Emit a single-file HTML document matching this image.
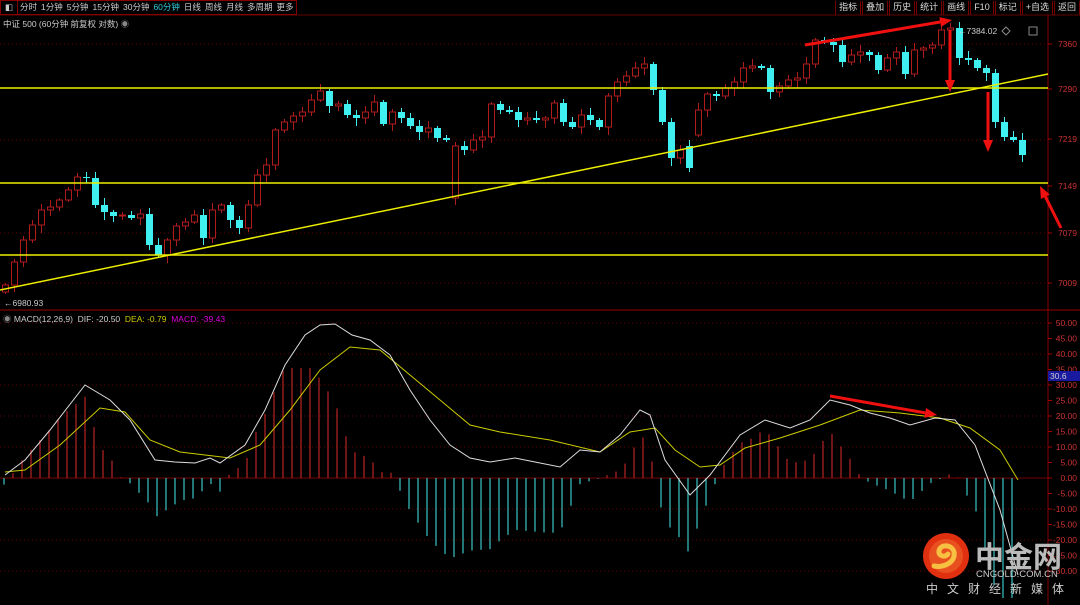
<!DOCTYPE html>
<html><head><meta charset="utf-8"><style>
html,body{margin:0;padding:0;background:#000;width:1080px;height:605px;overflow:hidden}
body{font-family:"Liberation Sans","Noto Sans CJK SC",sans-serif;position:relative}
#c{position:absolute;left:0;top:0}
.tb{position:absolute;top:0;height:15px;font-size:8.5px;color:#ccc;line-height:13px;white-space:nowrap;overflow:hidden}
.tb span{display:inline-block;padding:0 2px}
.rb{position:absolute;top:1px;right:0;height:14px;display:flex;white-space:nowrap}
.rb span{border-left:1px solid #700;border-right:1px solid #700;padding:0 3px;font-size:9px;color:#ddd;line-height:13px;margin-left:1px}
</style></head><body>
<svg id="c" width="1080" height="605" xmlns="http://www.w3.org/2000/svg"></svg>
<div class="tb" style="left:0;border:1px solid #800;height:13px;width:295px;top:0">
<span style="border-right:1px solid #800;padding:0 4px">&#9703;</span><span>分时</span><span>1分钟</span><span>5分钟</span><span>15分钟</span><span>30分钟</span><span style="color:#3cd">60分钟</span><span>日线</span><span>周线</span><span>月线</span><span>多周期</span><span>更多 &gt;</span>
</div>
<div class="rb"><span>指标</span><span>叠加</span><span>历史</span><span>统计</span><span>画线</span><span>F10</span><span>标记</span><span>+自选</span><span>返回</span></div>
<div style="position:absolute;left:3px;top:18px;font-size:8.5px;color:#ccc;white-space:nowrap">中证 500 (60分钟 前复权 对数) <span style="color:#888">&#9673;</span></div>
<div style="position:absolute;left:3px;top:313px;font-size:8.5px;color:#ccc;white-space:nowrap"><span style="color:#888">&#9673;</span> MACD(12,26,9) &nbsp;DIF: -20.50 &nbsp;<span style="color:#cc0">DEA: -0.79</span> &nbsp;<span style="color:#d0d">MACD: -39.43</span></div>
<script>
const S=document.getElementById('c');let h='';
const W=1048;
[44,140,233,283].forEach(y=>h+=`<line x1="0" y1="${y}" x2="${W}" y2="${y}" stroke="#600" stroke-dasharray="1,3"/>`);
[323,354,385,416,447,509,540,571].forEach(y=>h+=`<line x1="0" y1="${y}" x2="${W}" y2="${y}" stroke="#600" stroke-dasharray="1,3"/>`);
h+=`<line x1="0" y1="478" x2="${W}" y2="478" stroke="#700"/>`;
h+=`<line x1="0" y1="15" x2="1080" y2="15" stroke="#600"/>`;
h+=`<line x1="0" y1="310" x2="1080" y2="310" stroke="#900"/>`;
h+=`<line x1="${W}" y1="15" x2="${W}" y2="605" stroke="#800"/>`;
[[44,'7360'],[89,'7290'],[139,'7219'],[186,'7149'],[233,'7079'],[283,'7009']].forEach(a=>{h+=`<line x1="${W}" y1="${a[0]}" x2="${W+4}" y2="${a[0]}" stroke="#a00"/><text x="1077" y="${a[0]+3}" fill="#c33" font-size="8.5" text-anchor="end">${a[1]}</text>`});
for(let v=50;v>=-30;v-=5){const y=478-v*3.1;h+=`<line x1="${W}" y1="${y}" x2="${W+4}" y2="${y}" stroke="#a00"/><text x="1077" y="${y+3}" fill="#c33" font-size="8.5" text-anchor="end">${v.toFixed(2)}</text>`}
const C=[285,262,240,225,210,207,200,190,177,178,205,212,216,215,218,214,245,255,240,226,222,215,238,210,205,220,228,205,175,165,130,122,116,112,100,91,106,104,115,118,112,102,124,112,118,126,132,128,138,140,[198,146],150,140,137,104,110,112,120,118,120,118,103,122,127,115,120,127,96,82,76,68,64,90,122,158,150,[146,168],[135,110],94,96,88,82,68,66,68,92,86,80,78,64,40,42,45,62,55,52,55,70,58,52,74,50,48,45,30,28,58,60,68,73,122,137,140,155];
let prev=292;
C.forEach((d,i)=>{let o,c;if(Array.isArray(d)){o=d[0];c=d[1]}else{o=prev;c=d}
 prev=c;const x=2+9*i;const t=Math.min(o,c),b=Math.max(o,c);const hi=t-(2+(i*7)%6),lo=b+(2+(i*5)%7);
 const up=c<o;const col=up?'#b01c1c':'#40f0f0';
 h+=`<line x1="${x+3.5}" y1="${hi}" x2="${x+3.5}" y2="${lo}" stroke="${col}"/>`;
 if(up)h+=`<rect x="${x+.5}" y="${t}" width="6" height="${Math.max(b-t,1)}" fill="#000" stroke="${col}"/>`;
 else h+=`<rect x="${x}" y="${t}" width="7" height="${Math.max(b-t,1)}" fill="${col}"/>`;
});
[88,183,255].forEach(y=>h+=`<line x1="0" y1="${y}" x2="${W}" y2="${y}" stroke="#ee0" stroke-width="1.5"/>`);
h+=`<line x1="0" y1="290" x2="${W}" y2="74" stroke="#ee0" stroke-width="1.5"/>`;
h+=`<text x="958" y="34" fill="#ccc" font-size="8.5">←7384.02</text><text x="4" y="306" fill="#ccc" font-size="8.5">←6980.93</text>`;
h+=`<path d="M1006 27l4 4-4 4-4-4z" fill="none" stroke="#888"/><rect x="1029" y="27" width="8" height="8" fill="none" stroke="#888"/>`;
function interp(p,x){for(let i=0;i<p.length-1;i++){if(x>=p[i][0]&&x<=p[i+1][0]){const t=(x-p[i][0])/(p[i+1][0]-p[i][0]);return p[i][1]+t*(p[i+1][1]-p[i][1])}}return x<p[0][0]?p[0][1]:p[p.length-1][1]}
const DIF=[[5,475],[25,460],[50,430],[85,385],[110,400],[130,420],[155,460],[175,462],[195,463],[210,458],[220,463],[245,445],[265,410],[285,365],[305,335],[320,325],[335,324],[352,335],[370,340],[390,355],[410,390],[430,420],[450,445],[470,458],[490,462],[515,458],[535,462],[560,467],[580,450],[600,452],[620,435],[640,410],[650,415],[665,460],[690,495],[710,475],[740,435],[765,420],[790,428],[810,420],[830,400],[850,405],[870,413],[890,418],[910,425],[935,418],[955,420],[975,445],[1000,510],[1018,575]];
const DEA=[[5,472],[25,470],[60,445],[100,408],[125,412],[150,440],[180,452],[230,458],[260,445],[290,410],[320,370],[350,347],[380,350],[410,375],[440,400],[470,425],[500,432],[550,440],[600,452],[630,432],[655,428],[675,450],[700,467],[720,465],[745,448],[780,438],[820,425],[860,410],[900,413],[940,418],[970,428],[1000,450],[1018,480]];
for(let x=4;x<=1018;x+=9){let v=(interp(DEA,x)-interp(DIF,x))*2.2;v=Math.max(-120,Math.min(110,v));const col=v>0?'#b82424':'#3bc4c4';h+=`<line x1="${x}" y1="478" x2="${x}" y2="${478-v}" stroke="${col}" stroke-width="1.2"/>`}
const pl=p=>p.map(a=>a.join(',')).join(' ');
h+=`<polyline points="${pl(DEA)}" fill="none" stroke="#cc0" stroke-width="1"/><polyline points="${pl(DIF)}" fill="none" stroke="#ddd" stroke-width="1"/>`;
h+=`<rect x="${W}" y="371" width="32" height="10" fill="#1a1aa0"/><text x="1050" y="379" fill="#ccc" font-size="8.5">30.6</text>`;
function arr(x1,y1,x2,y2){const a=Math.atan2(y2-y1,x2-x1),L=12,w=5;const bx=x2-L*Math.cos(a),by=y2-L*Math.sin(a);const px=-Math.sin(a)*w,py=Math.cos(a)*w;
h+=`<line x1="${x1}" y1="${y1}" x2="${bx}" y2="${by}" stroke="#f01010" stroke-width="3"/><polygon points="${x2},${y2} ${bx+px},${by+py} ${bx-px},${by-py}" fill="#f01010"/>`}
arr(805,45,952,20);arr(950,30,950,92);arr(988,92,988,152);arr(1061,228,1040,186);arr(830,396,937,415);
h+=`<circle cx="946" cy="556" r="23" fill="#e03010"/><circle cx="946" cy="556" r="17" fill="#e85020"/><path d="M934 566c10 2 22-4 20-14-2-8-14-8-15-1-1 5 6 7 9 3" fill="none" stroke="#f8c040" stroke-width="5" stroke-linecap="round"/>`;
h+=`<text x="975" y="567" fill="#bbb" font-size="29" font-weight="bold" font-family="Noto Sans CJK SC,sans-serif">中金网</text>`;
h+=`<text x="976" y="577" fill="#ccc" font-size="9.5" font-family="Liberation Sans">CNGOLD.COM.CN</text>`;
h+=`<text x="926" y="593" fill="#ccc" font-size="12" letter-spacing="9" font-family="Noto Sans CJK SC,sans-serif">中文财经新媒体</text>`;
S.innerHTML=h;
</script>
</body></html>
